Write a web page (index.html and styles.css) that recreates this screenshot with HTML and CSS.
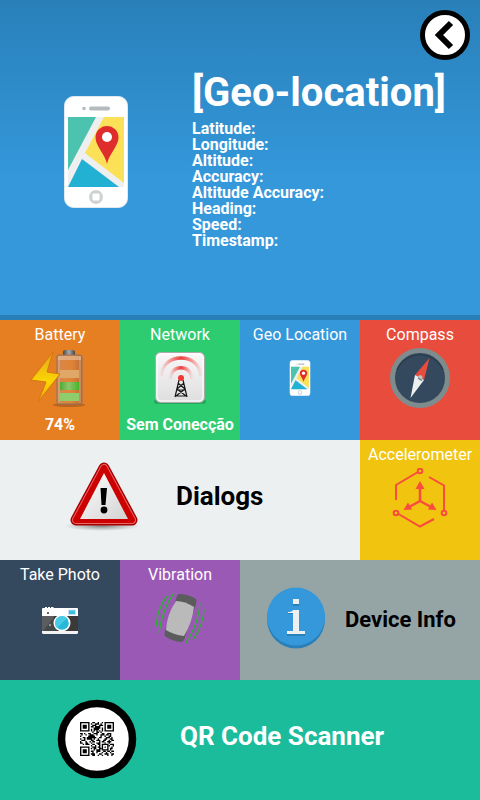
FILE: index.html
```html
<!DOCTYPE html>
<html lang="pt">
<head>
<meta charset="utf-8">
<meta name="viewport" content="width=device-width, initial-scale=1">
<title>Geo-location</title>
<link rel="stylesheet" href="styles.css">
</head>
<body>
<svg class="sprite" aria-hidden="true">
  <symbol id="phone" viewBox="0 0 64 112">
    <rect x=".5" y=".5" width="63" height="111" rx="9" fill="#fff" stroke="#dfe9ef"/>
    <circle cx="20" cy="12.500" r="1.800" fill="#b4bbbd"/>
    <rect x="25" y="10.500" width="21" height="4" rx="2" fill="#b4bbbd"/>
    <path d="M4 21h56v70H4z" fill="#efefef"/>
    <path d="M4 21h28L4 74z" fill="#4cc3ae"/>
    <path d="M40 21h20v66L21 57z" fill="#fbe158"/>
    <path d="M18 63L55 91H4z" fill="#22b1d3"/>
    <path d="M43 68C41 58 31.500 50 31.500 41.500a11.500 11.500 0 0 1 23 0C54.500 50 45 58 43 68z" fill="#df2c2c"/>
    <circle cx="43" cy="41" r="5" fill="#fff"/>
    <circle cx="32" cy="101" r="7" fill="#cfd2d2"/>
    <rect x="28.500" y="97.500" width="7" height="7" rx="1" fill="#fff"/>
  </symbol>
</svg>
<header class="hero">
  <button class="back" type="button" aria-label="Back">
    <svg viewBox="0 0 50 50"><circle cx="25" cy="25" r="22.500" fill="#fff" stroke="#000" stroke-width="5"/><path d="M31 13L19 25l12 12" fill="none" stroke="#000" stroke-width="6"/></svg>
  </button>
  <svg class="hero-icon"><use href="#phone"/></svg>
  <div class="hero-text">
    <h1>[Geo-location]</h1>
    <ul>
      <li>Latitude:</li>
      <li>Longitude:</li>
      <li>Altitude:</li>
      <li>Accuracy:</li>
      <li>Altitude Accuracy:</li>
      <li>Heading:</li>
      <li>Speed:</li>
      <li>Timestamp:</li>
    </ul>
  </div>
</header>
<main class="tiles">
  <button type="button" class="tile orange">
    <span>Battery</span>
    <svg class="icon" viewBox="0 0 60 60">
      <defs>
        <linearGradient id="glass"><stop stop-color="#c98a5c"/><stop offset=".25" stop-color="#dd8540"/><stop offset=".6" stop-color="#e08338"/><stop offset="1" stop-color="#b96b35"/></linearGradient>
        <linearGradient id="cap"><stop stop-color="#444"/><stop offset=".5" stop-color="#aaa"/><stop offset="1" stop-color="#444"/></linearGradient>
        <linearGradient id="cell"><stop stop-color="#4cac31"/><stop offset=".45" stop-color="#8fc46b"/><stop offset="1" stop-color="#46b52b"/></linearGradient>
        <linearGradient id="bolt" x2="0" y2="1"><stop stop-color="#e5a51b"/><stop offset=".6" stop-color="#fbd704"/><stop offset="1" stop-color="#eda40d"/></linearGradient>
      </defs>
      <ellipse cx="39" cy="57" rx="16" ry="2" fill="#9c5420" opacity=".6"/>
      <rect x="33" y="2" width="12" height="6" rx="2" fill="url(#cap)"/>
      <rect x="27" y="7" width="25" height="49" rx="2" fill="url(#glass)" stroke="#8b7262"/>
      <rect x="28" y="8" width="23" height="4" fill="#e3b997" opacity=".7"/>
      <rect x="30" y="22" width="19" height="8" fill="#dfa866"/>
      <rect x="30" y="34" width="19" height="8" fill="url(#cell)"/>
      <rect x="30" y="45" width="19" height="8" fill="#8fcc6b"/>
      <path d="M29 9v46M50 9v46" stroke="#e6c0a2" opacity=".7"/>
      <path d="M23 4L1 32l15 2-8 20 22-28-13-2z" fill="url(#bolt)" stroke="#d9760f"/>
    </svg>
    <strong>74%</strong>
  </button>
  <button type="button" class="tile green">
    <span>Network</span>
    <svg class="icon" viewBox="0 0 60 60">
      <defs>
        <linearGradient id="panel" x2="0" y2="1"><stop stop-color="#f8f8f8"/><stop offset="1" stop-color="#dedede"/></linearGradient>
        <linearGradient id="wave"><stop stop-color="#f33" stop-opacity=".05"/><stop offset=".5" stop-color="#e93f3f"/><stop offset="1" stop-color="#f33" stop-opacity=".05"/></linearGradient>
      </defs>
      <rect x="4" y="51" width="52" height="5" rx="2.500" fill="#178743" opacity=".5"/>
      <rect x="5.500" y="4.500" width="49" height="50" rx="5" fill="url(#panel)" stroke="#aaa"/>
      <rect x="7" y="6" width="46" height="47" rx="4" fill="none" stroke="#fff"/>
      <path d="M11 28C12 4 50 4 51 28" fill="none" stroke="url(#wave)" stroke-width="3.500"/>
      <path d="M20 31C20 16 42 16 42 31" fill="none" stroke="url(#wave)" stroke-width="3.500"/>
      <path d="M29 32l-4 17M33 32l4 17M28 35l7 6M34 35l-7 6M27 41l9 7M35 41l-9 7M26 42h10M25 48h12" fill="none" stroke="#171717" stroke-width="1.200"/>
      <circle cx="31" cy="30" r="3" fill="#f13636"/>
    </svg>
    <strong>Sem Conecção</strong>
  </button>
  <button type="button" class="tile blue">
    <span>Geo Location</span>
    <svg class="icon small"><use href="#phone"/></svg>
  </button>
  <button type="button" class="tile red">
    <span>Compass</span>
    <svg class="icon" viewBox="0 0 60 60">
      <circle cx="30" cy="30" r="27.500" fill="#34495e" stroke="#7f8c8d" stroke-width="5"/>
      <path d="M7 22a25 25 0 0 1 46 0" fill="none" stroke="#2b3d50" stroke-width="1.500"/>
      <path d="M39.500 10L34 32l-4-2-5-3z" fill="#e74c3c"/>
      <path d="M25 27l9 5L20.500 50z" fill="#ecf0f1"/>
      <path d="M28 30a2.300 2.300 0 1 1 4 1z" fill="#bdc3c7"/><path d="M28 30l4 2.500" stroke="#7f8c8d" stroke-width="1.500"/>
    </svg>
  </button>
  <button type="button" class="tile wide pale">
    <svg class="warning" viewBox="0 0 80 80">
      <defs>
        <linearGradient id="sign" x2="1" y2="1"><stop stop-color="#fff"/><stop offset="1" stop-color="#d2d2d2"/></linearGradient>
        <radialGradient id="shade"><stop stop-color="#555" stop-opacity=".7"/><stop offset="1" stop-color="#777" stop-opacity="0"/></radialGradient>
      </defs>
      <ellipse cx="38" cy="67" rx="38" ry="5" fill="url(#shade)"/>
      <path d="M40 9L12 61h56z" fill="#a40000" stroke="#a40000" stroke-width="11" stroke-linejoin="round"/>
      <path d="M40 9L12 61h56z" fill="#cc0000" stroke="#e66" stroke-width="8" stroke-linejoin="round"/>
      <path d="M40 9L12 61h56z" fill="#cc0000" stroke="#cc0000" stroke-width="6" stroke-linejoin="round"/>
      <path d="M40 14L16 60h48z" fill="url(#sign)"/>
      <path d="M36.500 29h6.500l-1.500 17h-4z"/><circle cx="40" cy="51" r="3.400"/>
    </svg>
    <b>Dialogs</b>
  </button>
  <button type="button" class="tile yellow">
    <span>Accelerometer</span>
    <svg class="icon" viewBox="0 0 60 60" fill="none" stroke="#fa4c3e" stroke-width="2">
      <circle cx="30" cy="3" r="2.300"/><circle cx="6" cy="45" r="2.300"/><circle cx="54" cy="45" r="2.300"/>
      <path d="M28 4L6 17v15M39 9l15 8.500V42M8.500 46L30 58.500 44 51"/>
      <path d="M30 18v15l-11 6M30 33l11 6" stroke-width="2.500"/>
      <path d="M30 13l-4.500 8h9zM13.500 42l4.500-7.500 4 7zM46.500 42L42 34.500l-4 7z" fill="#fa4c3e" stroke-width="0"/>
    </svg>
  </button>
  <button type="button" class="tile navy">
    <span>Take Photo</span>
    <svg class="icon small" viewBox="0 -3 36 36">
      <path d="M0 6q0-1 1-1h2V4h2v1h1V4h2v1h1V4h2l1 1h23q1 0 1 1v7H0z" fill="#fff"/>
      <path d="M0 13h36v15H0z" fill="#3a3a3a"/><path d="M0 13h12v15H0z" fill="#5b5d61"/><path d="M12 14L1 28h14z" fill="#46494c"/>
      <path d="M0 28h36v1.500q0 1.500-1.500 1.500h-33Q0 31 0 29.500z" fill="#f3f3f3"/>
      <rect x="26.500" y="7" width="7" height="4.500" fill="#35c1e2" stroke="#cde"/>
      <circle cx="6" cy="10" r="1" fill="#333"/><circle cx="8" cy="22" r="1.200" fill="#939393"/>
      <circle cx="20" cy="20" r="8.500" fill="#fff"/><circle cx="20" cy="20" r="6.800" fill="#26b7d9"/><path d="M15 25A6.800 6.800 0 0 1 25 15z" fill="#48cbe7"/>
    </svg>
  </button>
  <button type="button" class="tile purple">
    <span>Vibration</span>
    <svg class="icon" viewBox="0 0 60 60">
      <path d="M29 6q9 0 17 5 1 1 0 5L34 52q-1 2-3 2-10-1-16-6-1-1 0-5L27 8q1-2 2-2z" fill="#5b5d5d"/>
      <path d="M26 13q9 0 18 6-2 16-10 29-10-1-18-6 1-16 10-29z" fill="#bababa"/>
      <path d="M17 8Q7 21 6 39M24 5Q12 21 9 45M50 15Q49 35 36 55M54 21Q54 35 43 52" fill="none" stroke="#29b32f" stroke-width="1.300"/>
    </svg>
  </button>
  <button type="button" class="tile medium gray">
    <svg class="info" viewBox="0 0 60 62">
      <circle cx="30" cy="32.500" r="29" fill="#2980b9"/><circle cx="30" cy="29.500" r="29" fill="#3498db"/>
      <path d="M27 14h6v5h-6zM22 26q5 0 5-2h6v22h6v3H21v-3h6V27h-5z" fill="#2980b9"/>
      <path d="M27 12h6v5h-6zM22 25q4 0 5-2h6v21h6v3H21v-3h6V26h-5z" fill="#ecf0f1"/>
    </svg>
    <b>Device Info</b>
  </button>
  <button type="button" class="tile full teal">
    <svg class="qr" viewBox="0 0 80 80">
      <circle cx="40" cy="40" r="35.500" fill="#fff" stroke="#000" stroke-width="7.500"/>
      <svg x="23" y="23" width="34" height="34" viewBox="0 0 25 25">
        <path d="M.5.500h6v6h-6zM18.500.500h6v6h-6zM.5 18.500h6v6h-6zM16.500 16.500h4v4h-4z" fill="none" stroke="#000"/>
        <path d="M2 2h3v3H2zM20 2h3v3h-3zM2 20h3v3H2zM18 18h1v1h-1z"/>
        <path d="M9 .5h2m2 0h1m2 0h1M8 1.500h1m2 0h3m1 0h1M9 2.500h3m2 0h3M8 3.500h2m1 0h4M10 4.500h5m1 0h1M8 5.500h1m1 0h4m2 0h1M8 6.500h1m1 0h1m1 0h1m1 0h1m1 0h1M9 7.500h1m2 0h2m1 0h1M0 8.500h2m1 0h1m2 0h2m2 0h3m3 0h2m2 0h3M1 9.500h1m2 0h1m2 0h3m2 0h1m2 0h3m1 0h2m1 0h1M0 10.500h1m5 0h5m4 0h1m2 0h1m2 0h2M2 11.500h2m1 0h7m2 0h2m3 0h3m1 0h1M0 12.500h1m2 0h1m1 0h4m1 0h1m2 0h1m4 0h2m2 0h2M1 13.500h3m4 0h2m2 0h3m2 0h2m2 0h1m1 0h2M0 14.500h1m3 0h1m2 0h1m1 0h2m3 0h1m1 0h2m2 0h3M0 15.500h2m2 0h2m2 0h1m3 0h3m3 0h1m2 0h1M2 16.500h1m1 0h3m2 0h2m2 0h2m7 0h3M8 17.500h1m2 0h1m2 0h1m6 0h1m2 0h1M9 18.500h3m1 0h2m8 0h1M8 19.500h1m1 0h2m2 0h2m6 0h2M10 20.500h1m1 0h3m7 0h1M8 21.500h2m2 0h3m2 0h2m1 0h2m1 0h2M9 22.500h1m2 0h1m3 0h1m2 0h1m2 0h1M8 23.500h3m3 0h2m2 0h3m2 0h2M9 24.500h2m2 0h1m2 0h1m3 0h1m2 0h1" stroke="#000"/>
      </svg>
    </svg>
    <b>QR Code Scanner</b>
  </button>
</main>
</body>
</html>
```
FILE: styles.css
```css
* { box-sizing: border-box; }

body {
  margin: 0;
  font: 16px/20px Roboto, sans-serif;
  color: #fff;
  background: #1abc9c;
}

.sprite {
  position: absolute;
  width: 0;
  height: 0;
}

.hero {
  position: relative;
  display: grid;
  grid-template-columns: 2fr 3fr;
  min-height: 320px;
  border-bottom: 5px solid #2980b9;
  background: linear-gradient(#2980b9, #3498db 180px);
}

.hero-icon {
  width: 64px;
  height: 112px;
  margin-top: 96px;
  justify-self: center;
}

.hero-text { padding-top: 69px; }

h1 {
  margin: 0 0 4px;
  font-size: 40px;
  line-height: 48px;
}

ul {
  margin: 0;
  padding: 0;
  list-style: none;
  font-weight: 700;
  line-height: 16px;
}

.back {
  position: absolute;
  top: 10px;
  right: 10px;
  width: 50px;
  height: 50px;
  padding: 0;
  border: 0;
  background: none;
  cursor: pointer;
}

svg { display: block; }

.tiles {
  display: grid;
  grid-template-columns: repeat(4, 1fr);
  grid-auto-rows: 120px;
}

.tile {
  display: flex;
  flex-direction: column;
  align-items: center;
  min-width: 0;
  padding: 5px 0 3px;
  border: 0;
  font: inherit;
  color: inherit;
  white-space: nowrap;
  cursor: pointer;
}

.icon {
  width: 60px;
  height: 60px;
  margin: 3px 0 7px;
}

.icon.small {
  width: 36px;
  height: 36px;
  margin-top: 15px;
}

.wide, .medium, .full {
  flex-direction: row;
  padding: 0;
}

.wide { grid-column: span 3; }
.medium { grid-column: span 2; }
.full { grid-column: span 4; }

.wide, .full {
  padding-bottom: 2px;
  font-size: 26px;
  line-height: 32px;
}

.wide b, .full b { margin-bottom: 6px; }

.wide {
  gap: 32px;
  padding-left: 64px;
  color: #000;
}

.medium {
  gap: 19px;
  padding-left: 26px;
  font-size: 22px;
  color: #000;
}

.full {
  gap: 43px;
  padding-left: 57px;
}

.warning, .qr {
  width: 80px;
  height: 80px;
}

.info {
  width: 60px;
  height: 62px;
  margin-bottom: 5px;
}

.orange { background: #e67e22; }
.green { background: #2ecc71; }
.blue { background: #3498db; }
.red { background: #e74c3c; }
.pale { background: #ecf0f1; }
.yellow { background: #f1c40f; }
.navy { background: #34495e; }
.purple { background: #9b59b6; }
.gray { background: #95a5a6; }
.teal { background: #1abc9c; }
```
